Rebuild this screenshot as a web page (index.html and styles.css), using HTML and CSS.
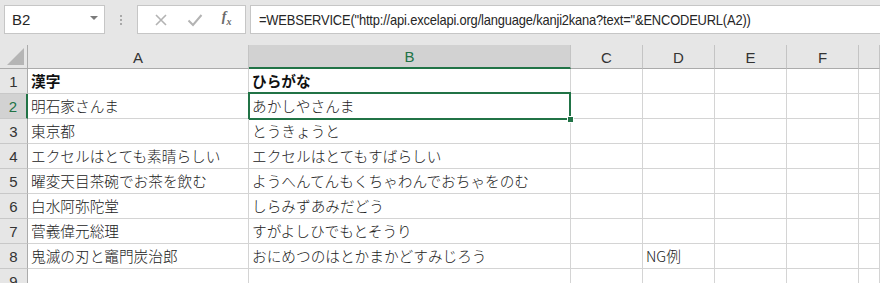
FILE: index.html
```html
<!DOCTYPE html>
<html lang="ja">
<head>
    <meta charset="UTF-8">
    <title>WEBSERVICE kanji2kana</title>
    <link rel="stylesheet" href="styles.css">
</head>
<body>
    <div class="toolbar">
        <div class="name-box">
            <span>B2</span>
            <span class="caret"></span>
        </div>
        <div class="grip"><i></i><i></i><i></i></div>
        <div class="fx-buttons">
            <svg class="btn-icon" width="14" height="14" viewBox="0 0 14 14"><path d="M2 2 L12 12 M12 2 L2 12" stroke="#b3b3b3" stroke-width="1.6" fill="none"/></svg>
            <svg class="btn-icon" width="16" height="14" viewBox="0 0 16 14"><path d="M1.5 7.5 L6 12 L14.5 2" stroke="#b3b3b3" stroke-width="2" fill="none"/></svg>
            <span class="fx">f<sub>x</sub></span>
        </div>
        <div class="formula"><span class="formula-text">=WEBSERVICE("http://api.excelapi.org/language/kanji2kana?text="&amp;ENCODEURL(A2))</span></div>
    </div>

    <div class="sheet">
        <div class="hd corner"><span class="tri"></span></div>
        <div class="hd col">A</div>
        <div class="hd col sel-col">B</div>
        <div class="hd col">C</div>
        <div class="hd col">D</div>
        <div class="hd col">E</div>
        <div class="hd col">F</div>
        <div class="hd col"></div>

        <div class="hd row">1</div>
        <div class="cell bold">漢字</div>
        <div class="cell bold">ひらがな</div>
        <div class="cell"></div><div class="cell"></div><div class="cell"></div><div class="cell"></div><div class="cell"></div>

        <div class="hd row sel-row">2</div>
        <div class="cell">明石家さんま</div>
        <div class="cell active">あかしやさんま<span class="handle"></span></div>
        <div class="cell"></div><div class="cell"></div><div class="cell"></div><div class="cell"></div><div class="cell"></div>

        <div class="hd row">3</div>
        <div class="cell">東京都</div>
        <div class="cell">とうきょうと</div>
        <div class="cell"></div><div class="cell"></div><div class="cell"></div><div class="cell"></div><div class="cell"></div>

        <div class="hd row">4</div>
        <div class="cell">エクセルはとても素晴らしい</div>
        <div class="cell">エクセルはとてもすばらしい</div>
        <div class="cell"></div><div class="cell"></div><div class="cell"></div><div class="cell"></div><div class="cell"></div>

        <div class="hd row">5</div>
        <div class="cell">曜変天目茶碗でお茶を飲む</div>
        <div class="cell">ようへんてんもくちゃわんでおちゃをのむ</div>
        <div class="cell"></div><div class="cell"></div><div class="cell"></div><div class="cell"></div><div class="cell"></div>

        <div class="hd row">6</div>
        <div class="cell">白水阿弥陀堂</div>
        <div class="cell">しらみずあみだどう</div>
        <div class="cell"></div><div class="cell"></div><div class="cell"></div><div class="cell"></div><div class="cell"></div>

        <div class="hd row">7</div>
        <div class="cell">菅義偉元総理</div>
        <div class="cell">すがよしひでもとそうり</div>
        <div class="cell"></div><div class="cell"></div><div class="cell"></div><div class="cell"></div><div class="cell"></div>

        <div class="hd row">8</div>
        <div class="cell">鬼滅の刃と竈門炭治郎</div>
        <div class="cell">おにめつのはとかまかどすみじろう</div>
        <div class="cell"></div>
        <div class="cell">NG例</div>
        <div class="cell"></div><div class="cell"></div><div class="cell"></div>

        <div class="hd row">9</div>
        <div class="cell"></div><div class="cell"></div><div class="cell"></div><div class="cell"></div><div class="cell"></div><div class="cell"></div><div class="cell"></div>
    </div>
</body>
</html>
```

FILE: styles.css
```css
body {
    margin: 0;
    width: 880px;
    height: 283px;
    overflow: hidden;
    background-color: #e6e6e6;
    font-family: "Noto Sans CJK JP", "Noto Sans", sans-serif;
    color: #222222;
}
.toolbar {
    height: 45px;
    display: flex;
    align-items: flex-start;
    padding-top: 5px;
    box-sizing: border-box;
    padding-left: 4px;
}
.name-box {
    width: 101px;
    height: 29px;
    box-sizing: border-box;
    background-color: #ffffff;
    border: 1px solid #c6c6c6;
    display: flex;
    align-items: center;
    justify-content: space-between;
    padding: 0 6px 0 7px;
    font-family: "Liberation Sans", sans-serif;
    font-size: 15px;
    color: #262626;
}
.caret {
    width: 0;
    height: 0;
    border-left: 4px solid transparent;
    border-right: 4px solid transparent;
    border-top: 4px solid #7b7b7b;
    margin-top: -3px;
}
.grip {
    width: 32px;
    height: 29px;
    display: flex;
    flex-direction: column;
    align-items: center;
    justify-content: center;
    gap: 2px;
}
.grip i {
    width: 2px;
    height: 2px;
    background-color: #a9a9a9;
}
.fx-buttons {
    width: 109px;
    height: 29px;
    box-sizing: border-box;
    background-color: #ffffff;
    border: 1px solid #c6c6c6;
    display: flex;
    align-items: center;
    justify-content: space-around;
    padding: 0 4px 0 6px;
}
.fx {
    font-family: "Liberation Serif", serif;
    font-style: italic;
    font-weight: bold;
    font-size: 14px;
    color: #6a6a6a;
    margin-top: -4px;
}
.fx sub {
    font-size: 10px;
}
.formula {
    flex: 1;
    margin-left: 4px;
    height: 29px;
    box-sizing: border-box;
    background-color: #ffffff;
    border: 1px solid #c6c6c6;
    border-right: none;
    padding-left: 8px;
    font-family: "Liberation Sans", sans-serif;
    font-size: 15px;
    line-height: 27px;
    color: #262626;
    white-space: nowrap;
    overflow: hidden;
}
.formula-text {
    display: inline-block;
    letter-spacing: -0.2px;
    transform: scaleX(0.86);
    transform-origin: left center;
}
.sheet {
    display: grid;
    grid-template-columns: 28px 221px 322px 72px 72px 72px 72px 1fr;
    grid-template-rows: 24px repeat(9, 25px);
    background-color: #ffffff;
}
.hd {
    background-color: #e6e6e6;
    box-sizing: border-box;
    font-family: "Liberation Sans", sans-serif;
    font-size: 15px;
    color: #333333;
    display: flex;
    align-items: center;
    justify-content: center;
}
.col {
    border-right: 1px solid #c4c4c4;
    border-bottom: 1px solid #ababab;
    padding-top: 1px;
}
.corner {
    border-right: 1px solid #ababab;
    border-bottom: 1px solid #ababab;
    position: relative;
}
.tri {
    position: absolute;
    right: 3px;
    bottom: 3px;
    width: 0;
    height: 0;
    border-left: 17px solid transparent;
    border-bottom: 17px solid #b5b5b5;
}
.sel-col {
    background-color: #d2d2d2;
    color: #217346;
    border-bottom: 2px solid #217346;
}
.row {
    border-right: 1px solid #ababab;
    border-bottom: 1px solid #c8c8c8;
}
.sel-row {
    background-color: #d2d2d2;
    color: #217346;
    border-right: 2px solid #217346;
}
.cell {
    box-sizing: border-box;
    border-right: 1px solid #d4d4d4;
    border-bottom: 1px solid #d4d4d4;
    font-size: 11pt;
    font-weight: 300;
    line-height: 24px;
    padding-left: 3px;
    white-space: nowrap;
    color: #222222;
    position: relative;
}
.bold {
    font-weight: bold;
    color: #111111;
}
.active {
    overflow: visible;
}
.active::after {
    content: "";
    position: absolute;
    left: -1px;
    top: -2px;
    right: -1px;
    bottom: -2px;
    border: 2px solid #217346;
    pointer-events: none;
}
.handle {
    position: absolute;
    right: -4px;
    bottom: -5px;
    width: 5px;
    height: 5px;
    background-color: #217346;
    border: 1px solid #ffffff;
    z-index: 2;
}
```
